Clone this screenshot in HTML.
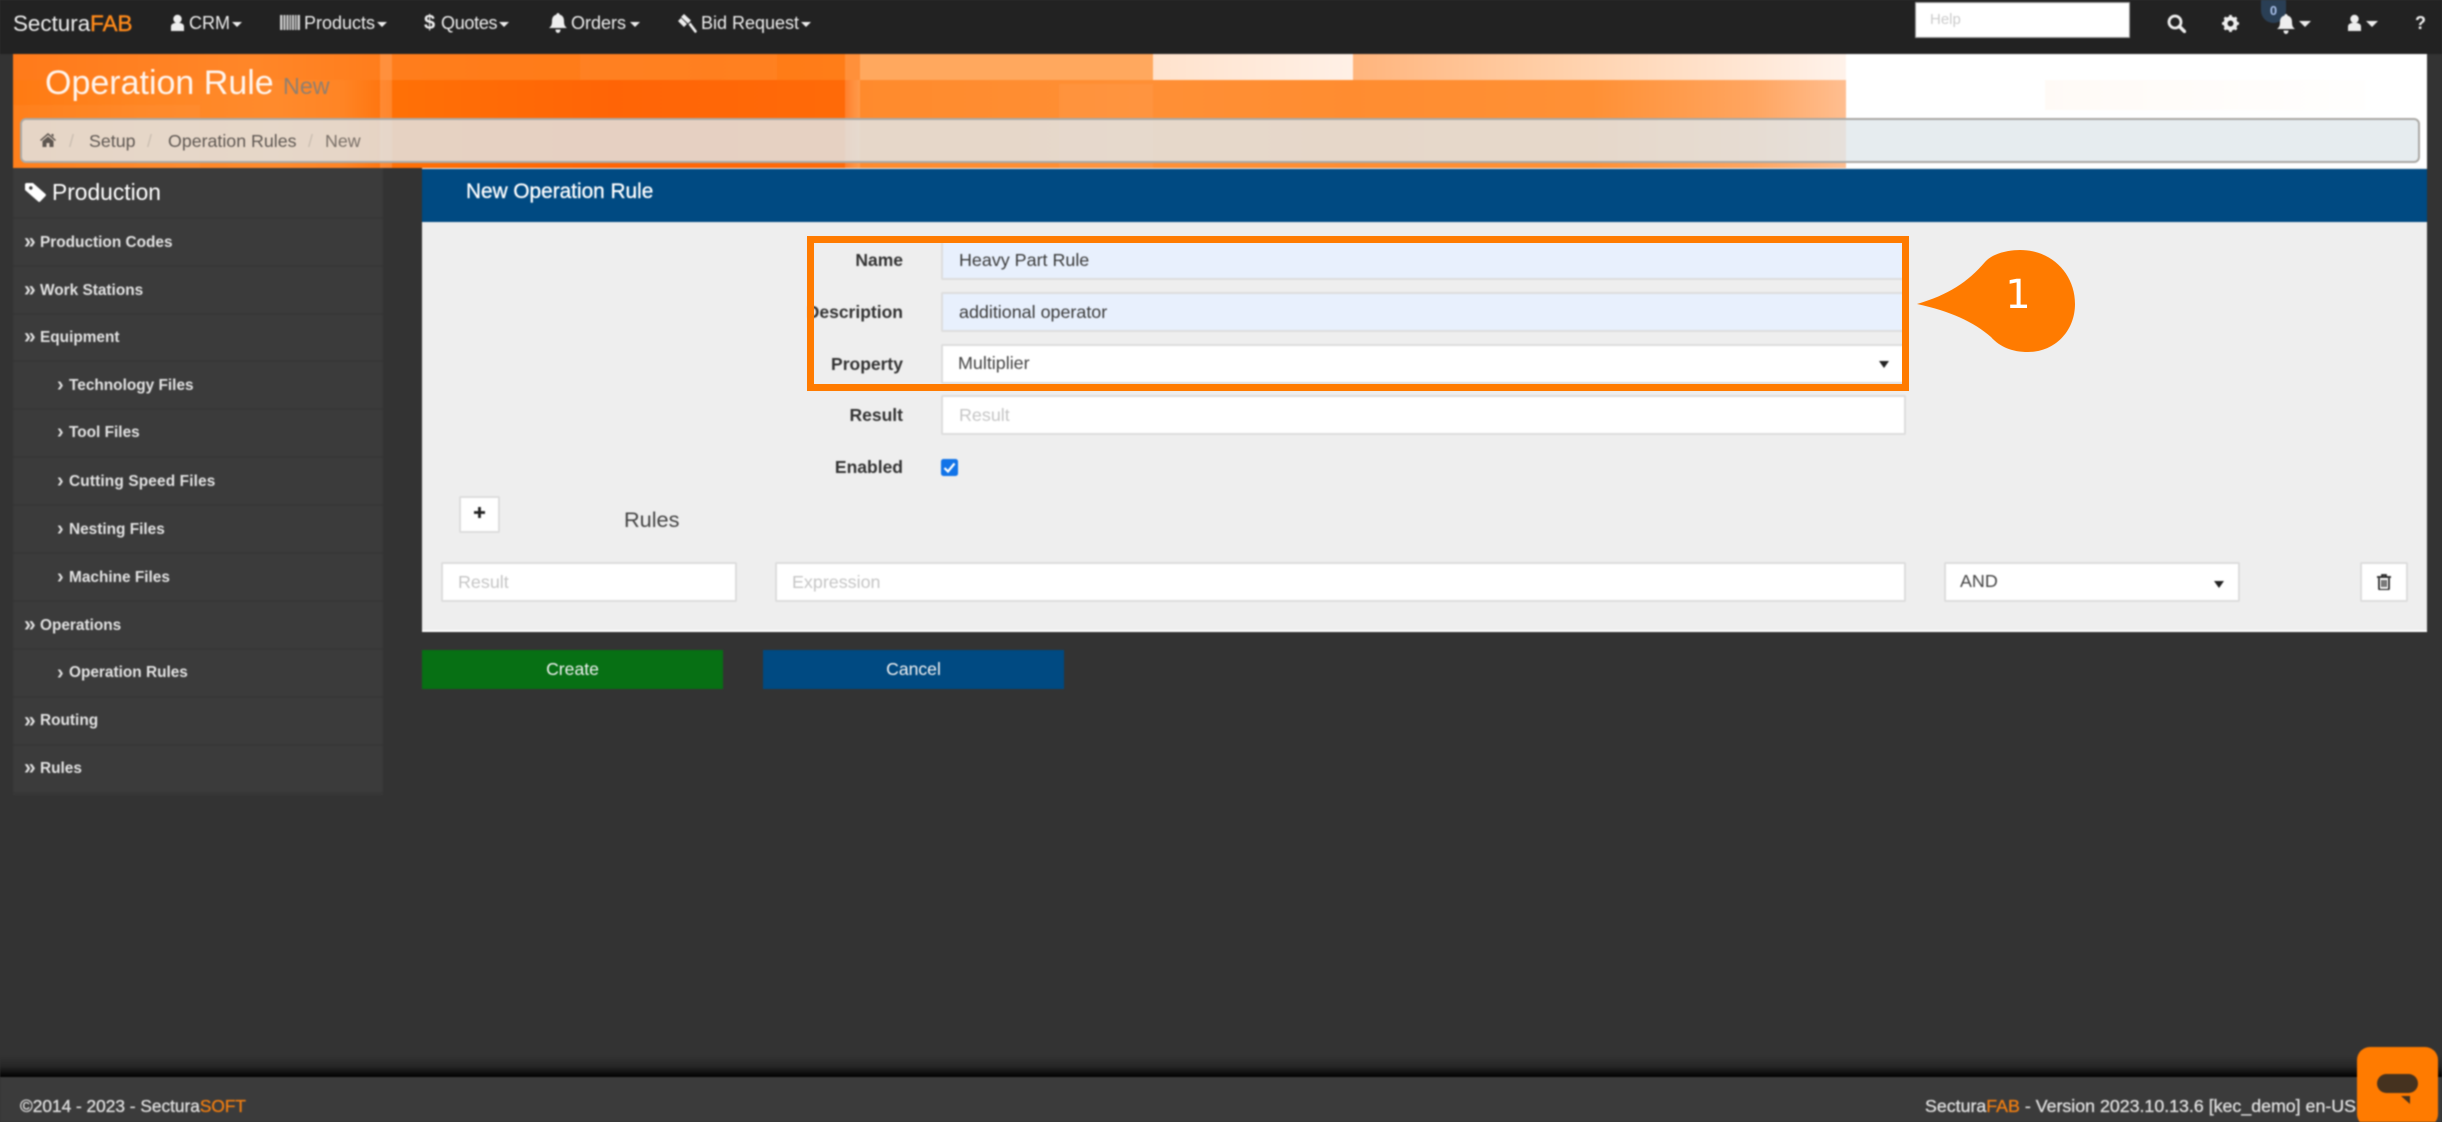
<!DOCTYPE html>
<html lang="en"><head><meta charset="utf-8"><title>Operation Rule</title>
<style>
*{box-sizing:border-box}
html,body{margin:0;padding:0;width:2442px;height:1122px;overflow:hidden;background:#333;font-family:"Liberation Sans",Arial,sans-serif}
#w{position:absolute;left:0;top:0;width:2442px;height:1122px;filter:blur(.7px);overflow:hidden}
.a{position:absolute;white-space:nowrap}
.t{position:absolute;white-space:nowrap;height:24px;line-height:24px}
.nav{color:#eee;font-size:18px}
.caret{position:absolute;width:0;height:0;border-left:5px solid transparent;border-right:5px solid transparent;border-top:5px solid #eee;top:22px}
.bg{position:absolute}
.row{position:absolute;left:13px;width:370px;border-bottom:2px solid #363636;height:48px}
.s{position:absolute;white-space:nowrap;color:#e2e2e2;font-weight:bold;font-size:15.4px;height:24px;line-height:24px}
.c{position:absolute;white-space:nowrap;color:#ddd;font-weight:bold;height:24px;line-height:24px}
.lab{position:absolute;right:1539px;white-space:nowrap;font-weight:bold;font-size:17.5px;color:#333;height:24px;line-height:24px}
.in{position:absolute;background:#fff;border:2px solid #ddd;border-radius:2px;height:40px;font-size:17.9px;line-height:36px;color:#444;padding-left:14px;white-space:nowrap}
.ph{color:#c6c6c6}
.fill{background:#e8f0fd}
.arr{position:absolute;width:0;height:0;border-left:5px solid transparent;border-right:5px solid transparent;border-top:7px solid #222}
.ft{position:absolute;white-space:nowrap;height:24px;line-height:24px;font-size:17.3px;color:#ddd;-webkit-text-stroke:.35px #ddd}
</style></head><body>
<div id="w">
<!-- top nav -->
<div class="bg" style="left:0;top:0;width:2442px;height:54px;background:#222"></div>
<div class="t" style="left:13px;top:12px;font-size:22.4px;color:#eee">Sectura<span style="color:#ff8a1a;-webkit-text-stroke:.4px #ff8a1a">FAB</span></div>
<svg class="a" style="left:170px;top:14px" width="15" height="18" viewBox="0 0 15 18"><circle cx="7.5" cy="5" r="4.2" fill="#eee"/><path d="M1 17v-4.5c0-2.5 2.5-3.8 6.5-3.8s6.500 1.300 6.500 3.800V17z" fill="#eee"/></svg>
<div class="t nav" style="left:189px;top:11px">CRM</div><div class="caret" style="left:232px"></div>
<svg class="a" style="left:280px;top:15px" width="20" height="15" viewBox="0 0 20 15"><path d="M0 0h20v15H0z" fill="#ccc"/><path d="M3 0v15M6 0v15M9 0v15M11.500 0v15M14.500 0v15M17 0v15" stroke="#222" stroke-width=".9"/></svg>
<div class="t nav" style="left:304px;top:11px">Products</div><div class="caret" style="left:377px"></div>
<div class="t nav" style="left:424px;top:11px;font-size:20px;font-weight:bold">$</div>
<div class="t nav" style="left:441px;top:11px;letter-spacing:-.3px">Quotes</div><div class="caret" style="left:499px"></div>
<svg class="a" style="left:549px;top:13px" width="18" height="20" viewBox="0 0 18 20"><path d="M9 0c1 0 1.500.7 1.500 1.500C14 2.500 15 5 15 8c0 4 1 5.500 3 7H0c2-1.500 3-3 3-7 0-3 1-5.500 4.500-6.500C7.500.7 8 0 9 0zM6.500 16.500h5C11.500 18.500 10.500 20 9 20s-2.500-1.500-2.500-3.500z" fill="#eee"/></svg>
<div class="t nav" style="left:571px;top:11px">Orders</div><div class="caret" style="left:630px"></div>
<svg class="a" style="left:677px;top:14px" width="20" height="19" viewBox="0 0 20 19"><path d="M7 0l7 6.500-3 3L4 3zM1 7l3-3 6 6-3 3zM11.500 10.500l2-2 6 8c.5.700.3 1.500-.3 2s-1.200.4-1.700-.1z" fill="#eee"/></svg>
<div class="t nav" style="left:701px;top:11px">Bid Request</div><div class="caret" style="left:801px"></div>

<div class="a" style="left:1915px;top:2px;width:215px;height:36px;background:#fff;border:1px solid #999;padding-left:14px;font-size:15px;line-height:33px;color:#ccc">Help</div>
<svg class="a" style="left:2167px;top:14px" width="19" height="19" viewBox="0 0 19 19"><circle cx="8" cy="8" r="6" fill="none" stroke="#eee" stroke-width="2.800"/><path d="M12.500 12.500l5 5" stroke="#eee" stroke-width="3.400" stroke-linecap="round"/></svg>
<svg class="a" style="left:2222px;top:15px" width="17" height="17" viewBox="0 0 17 17"><circle cx="8.500" cy="8.500" r="5" fill="none" stroke="#eee" stroke-width="4"/><path d="M8.500 0v3M8.500 14v3M0 8.500h3M14 8.500h3M2.500 2.500l2 2M12.500 12.500l2 2M14.500 2.500l-2 2M4.500 12.500l-2 2" stroke="#eee" stroke-width="2.800"/></svg>
<div class="a" style="left:2261px;top:0;width:25px;height:23px;border-radius:0 0 13px 13px;background:#2a3f55;color:#a9c0ea;font-size:13px;font-weight:bold;text-align:center;line-height:21px">0</div>
<svg class="a" style="left:2277px;top:14px" width="18" height="20" viewBox="0 0 18 20"><path d="M9 0c1 0 1.500.7 1.500 1.500C14 2.500 15 5 15 8c0 4 1 5.500 3 7H0c2-1.500 3-3 3-7 0-3 1-5.500 4.500-6.500C7.500.7 8 0 9 0zM6.500 16.500h5C11.500 18.500 10.500 20 9 20s-2.500-1.500-2.500-3.500z" fill="#eee"/></svg>
<div class="caret" style="left:2299px;top:21px;border-left-width:6px;border-right-width:6px;border-top-width:6px"></div>
<svg class="a" style="left:2347px;top:14px" width="15" height="18" viewBox="0 0 15 18"><circle cx="7.500" cy="5" r="4.200" fill="#eee"/><path d="M1 17v-4.500c0-2.500 2.500-3.800 6.500-3.800s6.500 1.300 6.500 3.800V17z" fill="#eee"/></svg>
<div class="caret" style="left:2366px;top:21px;border-left-width:6px;border-right-width:6px;border-top-width:6px"></div>
<div class="t" style="left:2415px;top:11px;color:#eee;font-size:18px;font-weight:bold">?</div>

<!-- header -->
<div class="bg" style="left:13px;top:54px;width:2414px;height:114px;background:#fff;overflow:hidden">
 <div class="bg" style="left:0;top:26px;width:1833px;height:88px;background:linear-gradient(90deg,#ff7a12 0,#ff8522 130px,#ff8a2c 260px,#ff8424 330px,#ff7610 367px,#ff7006 380px,#ff6406 600px,#ff6a08 832px,#ff8a2c 847px,#ff8f35 1140px,#ff8c30 1337px,#ff9035 1580px,#ffa560 1740px,#ffbe90 1833px)"></div>
 <div class="bg" style="left:0;top:0;width:847px;height:26px;background:linear-gradient(90deg,#ff7a1a 0,#ff8628 240px,#ff7d1c 367px,#ff7a16 700px,#ff7d18 847px)"></div>
 <div class="bg" style="left:847px;top:0;width:293px;height:26px;background:#ffa85e"></div>
 <div class="bg" style="left:1140px;top:0;width:200px;height:26px;background:linear-gradient(90deg,#ffe2cc,#fff0e6)"></div>
 <div class="bg" style="left:1340px;top:0;width:493px;height:26px;background:linear-gradient(90deg,#ffb47c,#ffcfa8 200px,#ffe2cc 360px,#fff2ea)"></div>
 <div class="bg" style="left:367px;top:0;width:12px;height:114px;background:rgba(255,255,255,.15)"></div>
 <div class="bg" style="left:832px;top:0;width:15px;height:114px;background:rgba(255,255,255,.15)"></div>
 <div class="bg" style="left:567px;top:0;width:197px;height:26px;background:rgba(255,255,255,.04)"></div>
 <div class="bg" style="left:1046px;top:30px;width:94px;height:84px;background:rgba(255,255,255,.05)"></div>
 <div class="bg" style="left:0;top:51px;width:187px;height:63px;background:rgba(255,255,255,.04)"></div>
 <div class="bg" style="left:2032px;top:26px;width:320px;height:30px;background:linear-gradient(90deg,#fffaf6,#fffefd)"></div>
</div>
<div class="a" style="left:45px;top:64px;height:38px;line-height:38px;font-size:34px;color:#fff4ec">Operation Rule</div>
<div class="a" style="left:283px;top:72px;height:28px;line-height:28px;font-size:23.300px;color:#8f7f70">New</div>
<div class="a" style="left:20px;top:118px;width:2400px;height:45px;background:rgba(224,232,235,.82);border:2px solid #aaa8a4;border-radius:6px"></div>
<svg class="a" style="left:40px;top:133px" width="16" height="14" viewBox="0 0 16 14"><path d="M8 0l8 7-1 1-7-6-7 6-1-1zM2.500 8L8 3.500 13.500 8v6h-4v-4h-3v4h-4zM11.500 1h2v3l-2-1.500z" fill="#5e5650"/></svg>
<div class="t" style="left:69px;top:129px;font-size:17.800px;color:#c9bdb0">/</div>
<div class="t" style="left:89px;top:129px;font-size:17.800px;color:#5f5853">Setup</div>
<div class="t" style="left:147px;top:129px;font-size:17.800px;color:#c9bdb0">/</div>
<div class="t" style="left:168px;top:129px;font-size:17.800px;color:#5f5853">Operation Rules</div>
<div class="t" style="left:308px;top:129px;font-size:17.800px;color:#c9bdb0">/</div>
<div class="t" style="left:325px;top:129px;font-size:17.800px;color:#7a7068">New</div>

<!-- sidebar -->
<div class="bg" style="left:13px;top:168px;width:370px;height:627px;background:#3b3b3b"></div>
<div class="row" style="top:171px"></div>
<div class="row" style="top:219px"></div><div class="row" style="top:267px"></div><div class="row" style="top:314px"></div><div class="row" style="top:362px"></div><div class="row" style="top:410px"></div><div class="row" style="top:458px"></div><div class="row" style="top:506px"></div><div class="row" style="top:554px"></div><div class="row" style="top:602px"></div><div class="row" style="top:650px"></div><div class="row" style="top:698px"></div><div class="row" style="top:746px"></div>
<svg class="a" style="left:25px;top:183px" width="21" height="19" viewBox="0 0 21 19"><path d="M0 1.500C0 .7.700 0 1.500 0H8l12.500 11c.6.600.6 1.400 0 2l-5.300 5.500c-.6.600-1.400.6-2 0L0 7zM4 5a1.800 1.800 0 1 0 0-.1z" fill="#fff" fill-rule="evenodd"/></svg>
<div class="a" style="left:52px;top:178px;height:28px;line-height:28px;font-size:22.800px;color:#fff">Production</div>

<div class="c" style="left:24px;top:230px;font-size:21px">»</div><div class="s" style="left:40px;top:231px">Production Codes</div>
<div class="c" style="left:24px;top:278px;font-size:21px">»</div><div class="s" style="left:40px;top:279px">Work Stations</div>
<div class="c" style="left:24px;top:325px;font-size:21px">»</div><div class="s" style="left:40px;top:326px">Equipment</div>
<div class="c" style="left:57px;top:373px;font-size:20px">›</div><div class="s" style="left:69px;top:374px">Technology Files</div>
<div class="c" style="left:57px;top:420px;font-size:20px">›</div><div class="s" style="left:69px;top:421px">Tool Files</div>
<div class="c" style="left:57px;top:469px;font-size:20px">›</div><div class="s" style="left:69px;top:470px;letter-spacing:.15px">Cutting Speed Files</div>
<div class="c" style="left:57px;top:517px;font-size:20px">›</div><div class="s" style="left:69px;top:518px">Nesting Files</div>
<div class="c" style="left:57px;top:565px;font-size:20px">›</div><div class="s" style="left:69px;top:566px">Machine Files</div>
<div class="c" style="left:24px;top:613px;font-size:21px">»</div><div class="s" style="left:40px;top:614px">Operations</div>
<div class="c" style="left:57px;top:661px;font-size:20px">›</div><div class="s" style="left:69px;top:661px">Operation Rules</div>
<div class="c" style="left:24px;top:709px;font-size:21px">»</div><div class="s" style="left:40px;top:709px">Routing</div>
<div class="c" style="left:24px;top:756px;font-size:21px">»</div><div class="s" style="left:40px;top:757px">Rules</div>

<!-- panel -->
<div class="bg" style="left:422px;top:168px;width:2005px;height:464px;background:#eee;border-bottom:2px solid #fff"></div>
<div class="bg" style="left:422px;top:169px;width:2005px;height:53px;background:#004a82"></div>
<div class="t" style="left:466px;top:180px;font-size:20.800px;color:#fff;-webkit-text-stroke:.3px #fff">New Operation Rule</div>

<div class="lab" style="top:248px">Name</div>
<div class="lab" style="top:300px">Description</div>
<div class="lab" style="top:352px">Property</div>
<div class="lab" style="top:403px">Result</div>
<div class="lab" style="top:455px">Enabled</div>
<div class="in fill" style="left:941px;top:240px;width:965px;color:#3a3a3a;padding-left:16px">Heavy Part Rule</div>
<div class="in fill" style="left:941px;top:292px;width:965px;color:#3a3a3a;padding-left:16px">additional operator</div>
<div class="in" style="left:941px;top:344px;width:965px;padding-left:15px;line-height:34px">Multiplier</div>
<div class="arr" style="left:1879px;top:361px"></div>
<div class="in ph" style="left:941px;top:395px;width:965px;color:#c6c6c6;padding-left:16px">Result</div>
<svg class="a" style="left:941px;top:459px" width="17" height="17" viewBox="0 0 17 17"><rect width="17" height="17" rx="2.500" fill="#1173e8"/><path d="M3.500 9l3.500 3.500 6.500-8" fill="none" stroke="#fff" stroke-width="2.200"/></svg>

<div class="a" style="left:459px;top:496px;width:41px;height:37px;background:#fff;border:2px solid #ddd;border-radius:2px"></div>
<svg class="a" style="left:473px;top:506px" width="13" height="13" viewBox="0 0 13 13"><path d="M6.500 1v11M1 6.500h11" stroke="#222" stroke-width="2.800"/></svg>
<div class="a" style="left:624px;top:506px;height:28px;line-height:28px;font-size:21.700px;color:#444">Rules</div>

<div class="in" style="left:441px;top:562px;width:296px;padding-left:15px;color:#c6c6c6">Result</div>
<div class="in" style="left:775px;top:562px;width:1131px;padding-left:15px;color:#c6c6c6">Expression</div>
<div class="in" style="left:1944px;top:562px;width:296px;padding-left:14px;line-height:35px">AND</div>
<div class="arr" style="left:2214px;top:581px"></div>
<div class="a" style="left:2360px;top:562px;width:48px;height:40px;background:#fff;border:2px solid #ddd;border-radius:2px"></div>
<svg class="a" style="left:2377px;top:574px" width="14" height="16" viewBox="0 0 14 16"><path d="M5 2.500V1h4v1.500M0 3h14M2 4v10.500c0 .8.500 1.200 1.200 1.200h7.600c.7 0 1.200-.4 1.200-1.200V4" fill="none" stroke="#222" stroke-width="1.700"/><path d="M5 6v7M7 6v7M9 6v7" stroke="#222" stroke-width="1.200"/></svg>

<div class="a" style="left:422px;top:650px;width:301px;height:39px;background:#077014;color:#f2f2f2;text-align:center;font-size:17.600px;line-height:38px">Create</div>
<div class="a" style="left:763px;top:650px;width:301px;height:39px;background:#004a82;color:#f2f2f2;text-align:center;font-size:17.600px;line-height:38px">Cancel</div>

<!-- footer -->
<div class="bg" style="left:0;top:1056px;width:2442px;height:21px;background:linear-gradient(180deg,rgba(0,0,0,0) 0,rgba(0,0,0,.25) 50%,#000 100%)"></div>
<div class="bg" style="left:0;top:1077px;width:2442px;height:45px;background:#3b3b3b"></div>
<div class="ft" style="left:20px;top:1094px">©2014 - 2023 - Sectura<span style="color:#ee7d11;-webkit-text-stroke:.35px #ee7d11">SOFT</span></div>
<div class="ft" style="left:1925px;top:1094px;font-size:17.8px">Sectura<span style="color:#ee7d11;-webkit-text-stroke:.35px #ee7d11">FAB</span> - Version 2023.10.13.6 [kec_demo] en-US</div>

<div class="bg" style="left:2357px;top:1047px;width:81px;height:80px;background:#ff7b00;border-radius:13px"></div>
<div class="bg" style="left:2377px;top:1074px;width:41px;height:19px;background:#45321f;border-radius:10px"></div>
<svg class="a" style="left:2401px;top:1096px" width="10" height="9" viewBox="0 0 10 9"><path d="M0 0h9v8z" fill="#45321f"/></svg>
</div>

<!-- annotation -->
<div class="a" style="left:807px;top:236px;width:1102px;height:155px;border:7px solid #ff7b00"></div>
<svg class="a" style="left:1910px;top:245px" width="175" height="115" viewBox="0 0 175 115"><path d="M7 59C38 50 58 37 75 17 83 8 99 5 110 5c32 0 55 24 55 54 0 27-20 48-47 48-16 0-28-5-37-15C64 77 40 66 7 59z" fill="#ff7b00"/></svg>
<div class="a" style="left:2005px;top:270px;width:26px;height:50px;line-height:50px;text-align:center;font-family:'DejaVu Sans',sans-serif;font-size:40px;color:#fff">1</div>
</body></html>
